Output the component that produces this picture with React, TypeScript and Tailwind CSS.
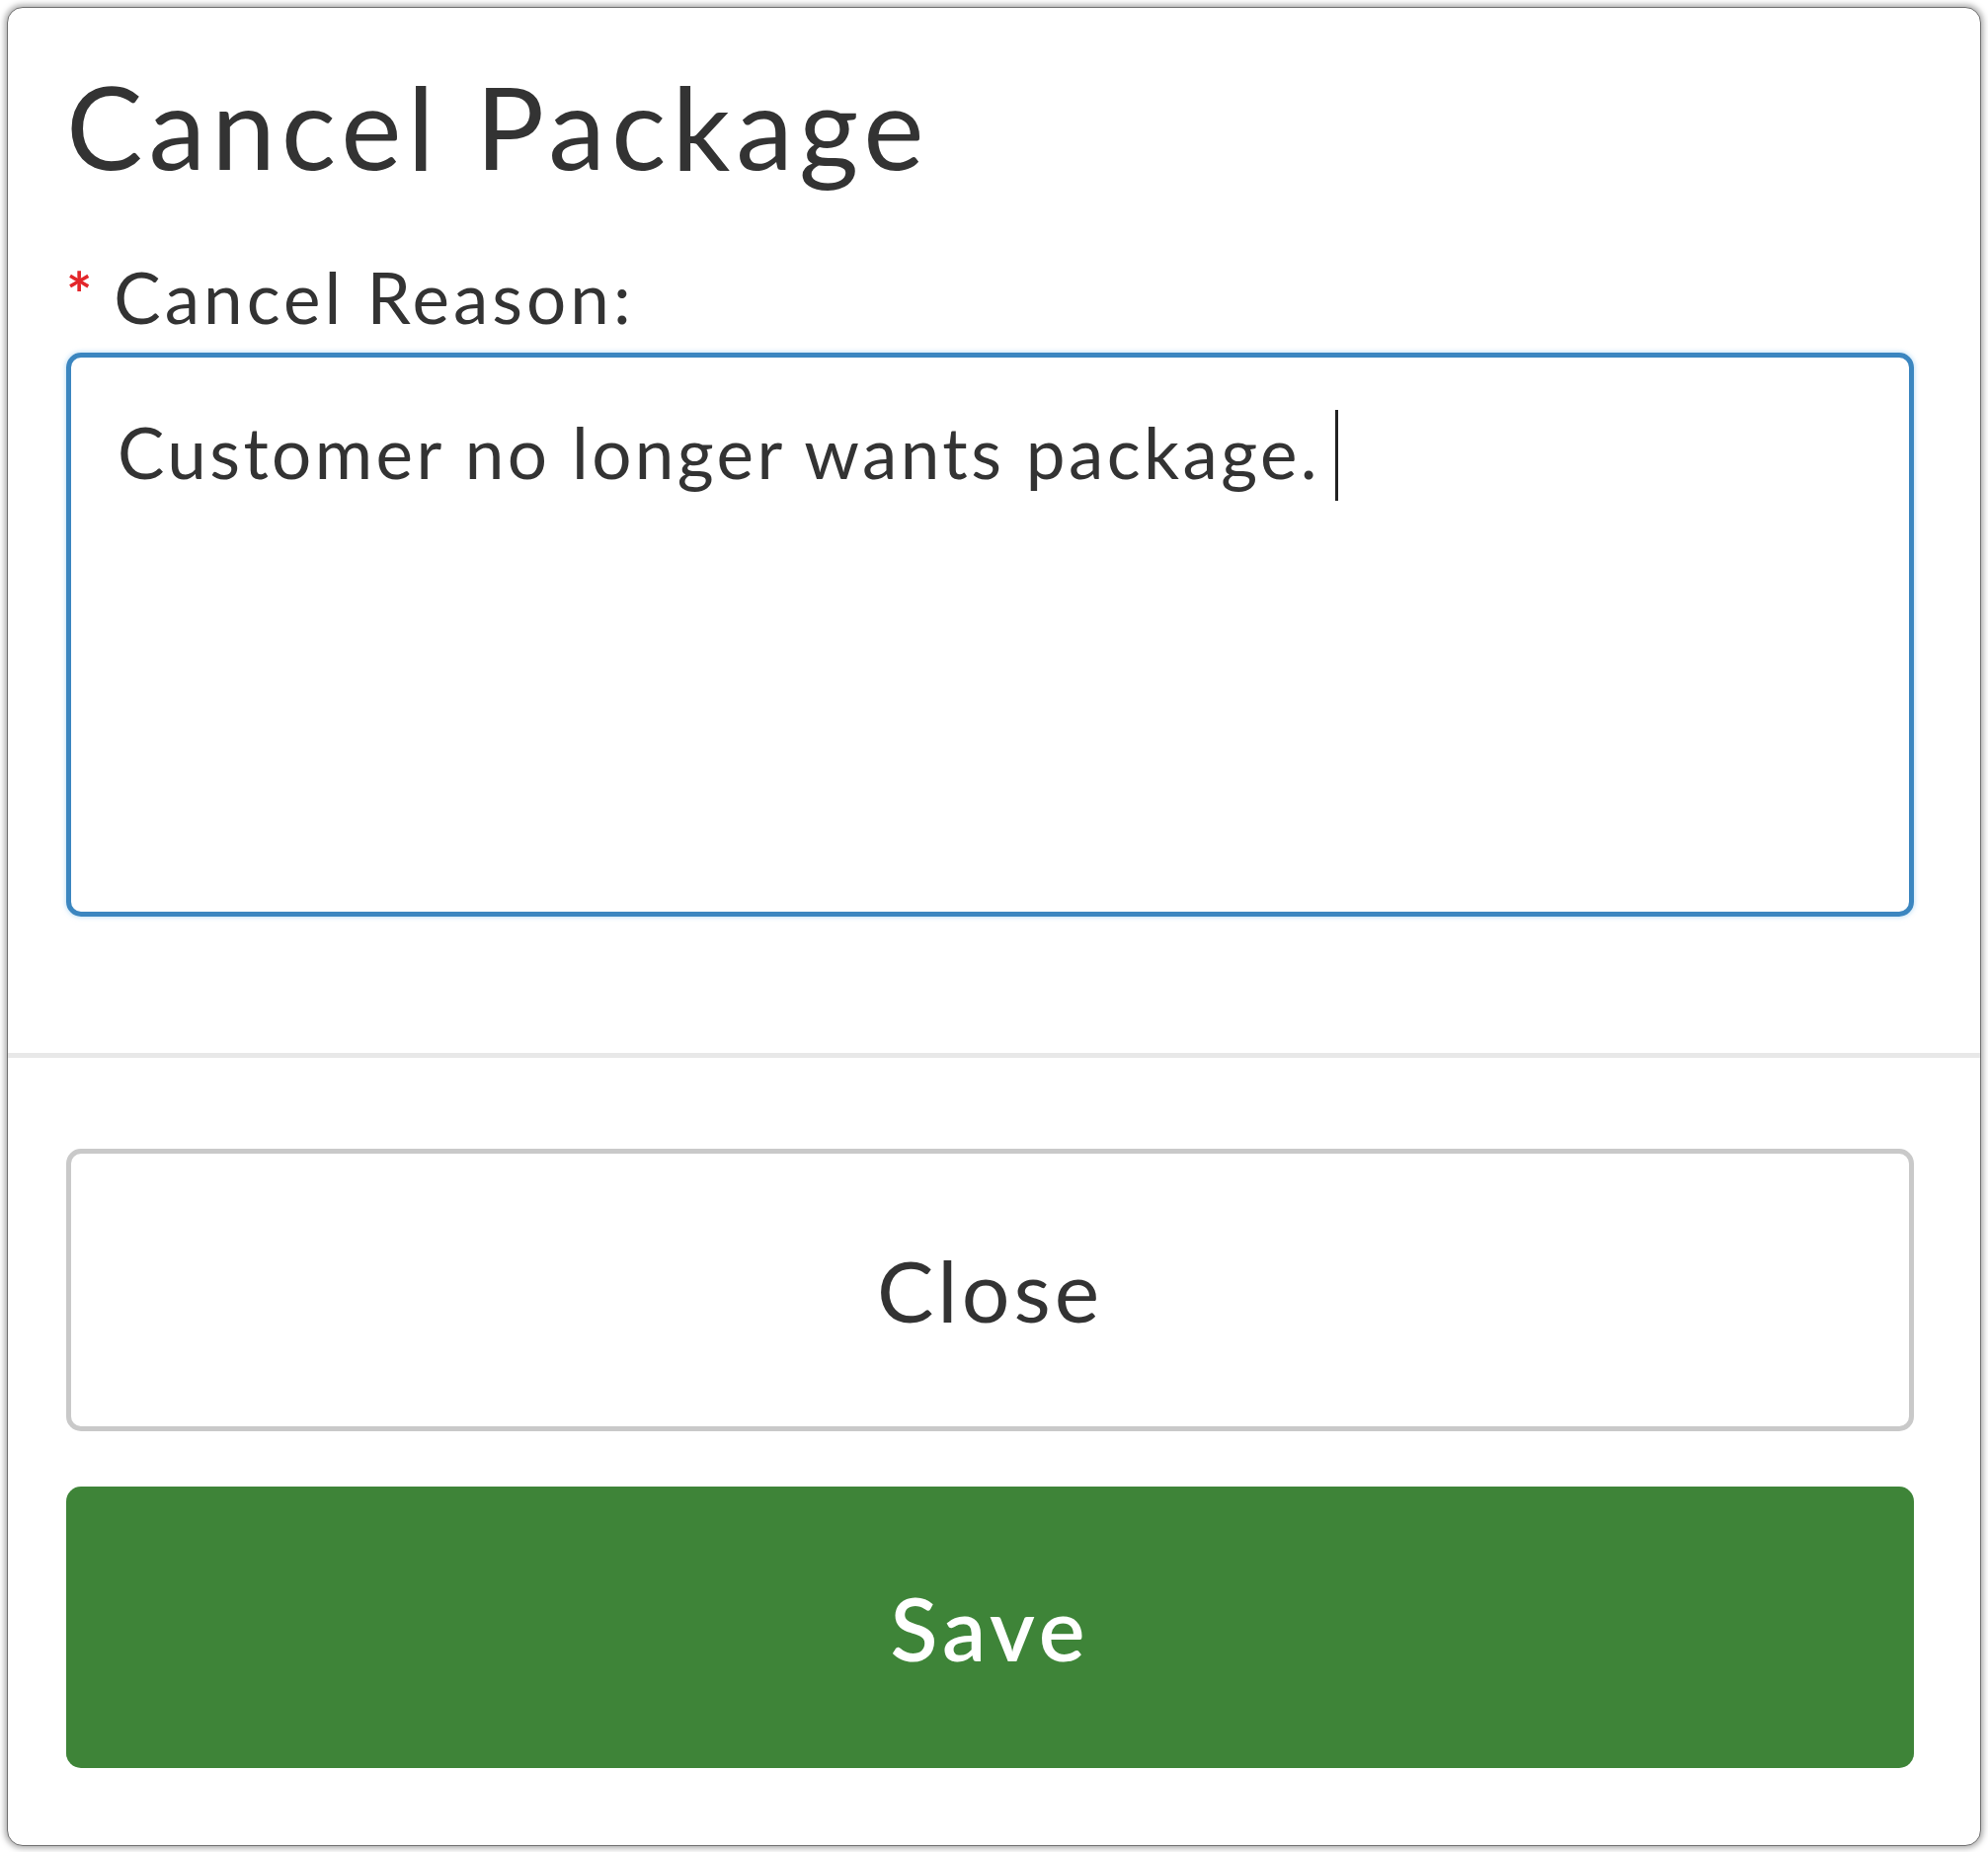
import React from "react";

export default function App() {
  const font = { fontFamily: '"Lato", "Open Sans", sans-serif' };
  return (
    <div className="w-[2013px] h-[1875px] bg-white overflow-hidden" style={font}>
      <div className="mx-[7px] mt-[7px] h-[1862px] rounded-[16px] border border-[#6f6f6f] bg-white shadow-[0_0_6px_2px_rgba(0,0,0,0.35)] flex flex-col">
        <div className="pl-[59px] pr-[67px] pt-[62px]">
          <h1 className="text-[116px] leading-none text-[#333333] font-normal tracking-[6px]">Cancel Package</h1>
          <div className="mt-[79px] flex items-start">
            <span className="text-[62px] leading-none text-[#e3262a] font-bold mt-[1px]">*</span>
            <span className="text-[71px] leading-none text-[#333333] ml-[22px] tracking-[4px]">Cancel Reason:</span>
          </div>
          <div className="mt-[21px] h-[571px] rounded-[15px] border-[5px] border-[#3b86c0] shadow-[0_0_4px_1px_rgba(140,200,240,0.5)] pl-[47px] pt-[60px]">
            <div className="flex items-start text-[71px] leading-none text-[#333333] tracking-[3.4px]">
              <span>Customer no longer wants package.</span>
              <span className="inline-block w-[3px] h-[92px] bg-[#222222] ml-[15px] -mt-[7px]"></span>
            </div>
          </div>
        </div>
        <div className="mt-[138px] h-[5px] bg-[#e8e8e8]"></div>
        <div className="pl-[59px] pr-[67px] pt-[92px] flex flex-col">
          <button className="h-[286px] rounded-[15px] border-[5px] border-[#c9c9c9] bg-white flex items-center justify-center text-[86px] leading-none text-[#333333] tracking-[4px]">
            Close
          </button>
          <button className="mt-[56px] h-[285px] rounded-[15px] bg-[#3e8438] flex items-center justify-center text-[88px] leading-none font-semibold text-white tracking-[5px]">
            Save
          </button>
        </div>
      </div>
    </div>
  );
}
